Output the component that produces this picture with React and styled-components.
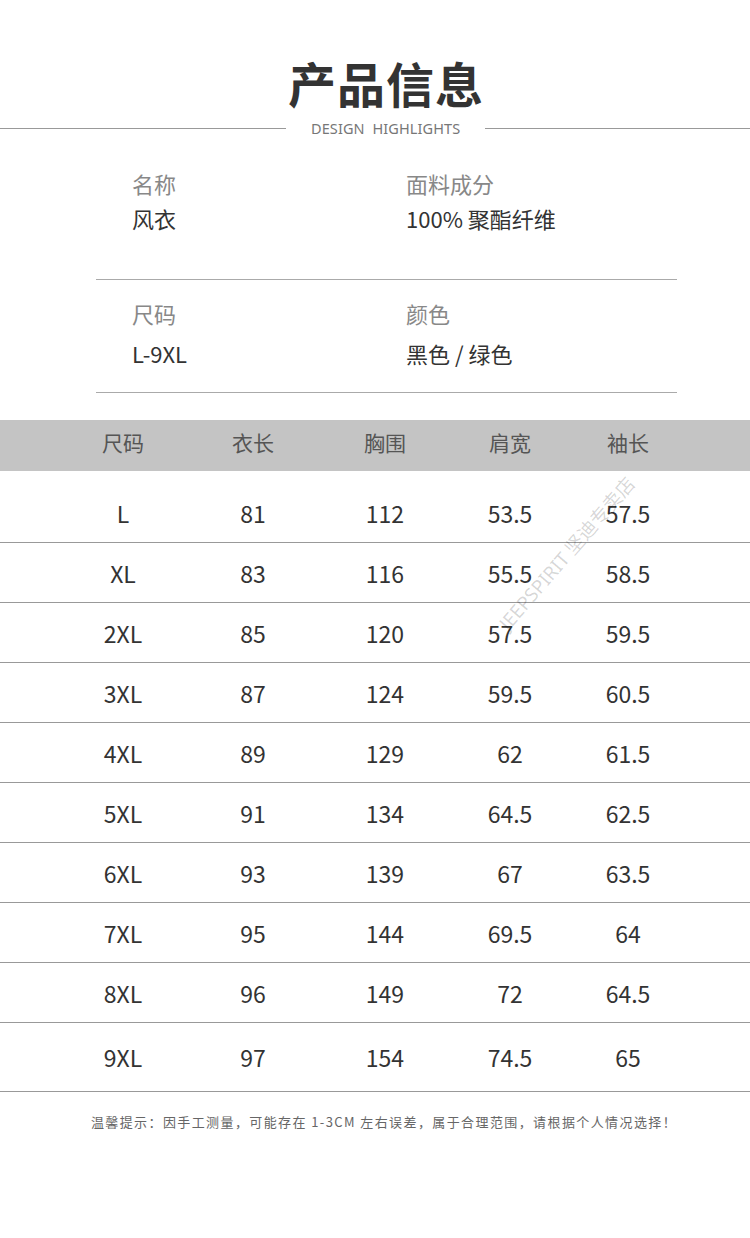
import styled, { createGlobalStyle } from "styled-components"

const GlobalStyle = createGlobalStyle`
  html, body {
    margin: 0;
    padding: 0;
    background: #fff;
  }
  body {
    font-family: "Noto Sans CJK SC", "Noto Sans", sans-serif;
    color: #333;
  }
`

const info = [
  [
    { label: "名称", value: "风衣" },
    { label: "面料成分", value: "100% 聚酯纤维" },
  ],
  [
    { label: "尺码", value: "L-9XL" },
    { label: "颜色", value: "黑色 / 绿色" },
  ],
]

const heads = ["尺码", "衣长", "胸围", "肩宽", "袖长"]

const rows = [
  ["L", "81", "112", "53.5", "57.5"],
  ["XL", "83", "116", "55.5", "58.5"],
  ["2XL", "85", "120", "57.5", "59.5"],
  ["3XL", "87", "124", "59.5", "60.5"],
  ["4XL", "89", "129", "62", "61.5"],
  ["5XL", "91", "134", "64.5", "62.5"],
  ["6XL", "93", "139", "67", "63.5"],
  ["7XL", "95", "144", "69.5", "64"],
  ["8XL", "96", "149", "72", "64.5"],
  ["9XL", "97", "154", "74.5", "65"],
]

export default function App() {
  return (
    <Page>
      <GlobalStyle />
      <Title>产品信息</Title>
      <Subtitle>
        <span>DESIGN&nbsp;&nbsp;HIGHLIGHTS</span>
      </Subtitle>

      <Info>
        {info.map((pair, i) => (
          <InfoRow key={i} $top={i === 0 ? 30 : 18} $bottom={i === 0 ? 46 : 24}>
            {pair.map((f) => (
              <Field key={f.label} $gap={i === 0 ? 5 : 10}>
                <Label>{f.label}</Label>
                <Value>{f.value}</Value>
              </Field>
            ))}
          </InfoRow>
        ))}
      </Info>

      <Table>
        <HeadRow>
          {heads.map((h) => (
            <Cell key={h}>{h}</Cell>
          ))}
        </HeadRow>
        <Body>
          {rows.map((r) => (
            <Row key={r[0]}>
              {r.map((c, j) => (
                <Cell key={j}>{c}</Cell>
              ))}
            </Row>
          ))}
        </Body>
        <Watermark>JEEPSPIRIT 坚迪专卖店</Watermark>
      </Table>

      <Note>温馨提示：因手工测量，可能存在 1-3CM 左右误差，属于合理范围，请根据个人情况选择！</Note>
    </Page>
  )
}

const Page = styled.div`
  width: 750px;
  height: 1238px;
  overflow: hidden;
  background: #fff;
`

const Title = styled.h1`
  margin: 0;
  padding: 52px 0 0 22px;
  text-align: center;
  font-size: 48px;
  line-height: 60px;
  font-weight: 700;
  letter-spacing: 1px;
  color: #333;
`

const Subtitle = styled.div`
  display: grid;
  grid-template-columns: 286px auto 1fr;
  align-items: center;
  column-gap: 25px;
  margin-top: 6px;
  height: 20px;
  &::before, &::after {
    content: "";
    height: 1px;
    background: #999;
  }
  span {
    font-family: "Noto Sans", sans-serif;
    font-size: 14.5px;
    letter-spacing: 0.1px;
    color: #777;
  }
`

const Info = styled.div`
  margin: 0 73px 0 96px;
`

const InfoRow = styled.div`
  display: grid;
  grid-template-columns: 274px 1fr;
  padding: ${(p) => p.$top}px 0 ${(p) => p.$bottom}px 36px;
  border-bottom: 1px solid #aaa;
`

const Field = styled.div`
  display: flex;
  flex-direction: column;
  gap: ${(p) => p.$gap}px;
`

const Label = styled.div`
  font-size: 22px;
  line-height: 30px;
  color: #888;
`

const Value = styled.div`
  font-size: 22px;
  line-height: 30px;
  color: #333;
`

const Table = styled.div`
  position: relative;
  margin-top: 27px;
`

const cols = `
  display: grid;
  grid-template-columns: 130px 130px 134px 116px 120px;
  padding-left: 58px;
  align-items: center;
  box-sizing: border-box;
`

const HeadRow = styled.div`
  ${cols}
  height: 51px;
  padding-bottom: 7px;
  background: #c4c4c4;
  color: #555;
  font-size: 21px;
`

const Body = styled.div`
  padding-top: 12px;
`

const Row = styled.div`
  ${cols}
  height: 60px;
  border-bottom: 1px solid #999;
  font-size: 23px;
  color: #333;
  &:last-child {
    height: 69px;
  }
`

const Cell = styled.div`
  text-align: center;
`

const Watermark = styled.div`
  position: absolute;
  left: 503px;
  top: 196px;
  transform: rotate(-49deg);
  transform-origin: left center;
  white-space: nowrap;
  font-family: "Noto Sans", "Noto Sans CJK SC", sans-serif;
  font-size: 19px;
  line-height: 22px;
  color: rgba(0, 0, 0, 0.17);
  pointer-events: none;
`

const Note = styled.p`
  margin: 20px 0 0;
  padding-left: 18px;
  text-align: center;
  font-size: 13px;
  letter-spacing: 1.4px;
  color: #666;
`
